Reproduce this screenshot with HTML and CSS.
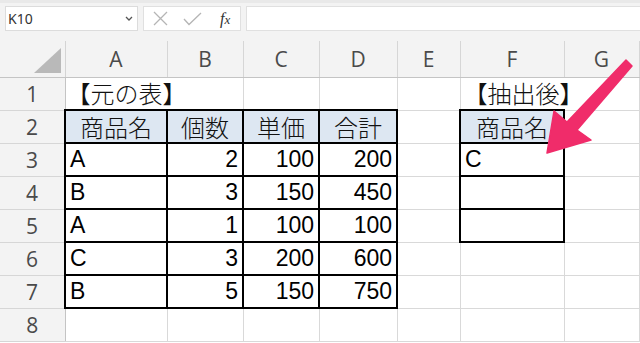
FILE: index.html
```html
<!DOCTYPE html>
<html lang="ja">
<head>
<meta charset="utf-8">
<title>Sheet</title>
<link rel="stylesheet" href="styles.css">
</head>
<body>
<div class="app">
  <div class="toolbar">
    <div class="namebox">
      <span class="ref">K10</span>
      <svg class="chev" width="8" height="5" viewBox="0 0 8 5"><path d="M1 1 L4 4 L7 1" fill="none" stroke="#555" stroke-width="1.3"/></svg>
    </div>
    <div class="fxbox">
      <svg class="icon-x" width="15" height="15" viewBox="0 0 15 15"><path d="M1 1 L14 14 M14 1 L1 14" stroke="#b5b5b5" stroke-width="1.3" fill="none"/></svg>
      <svg class="icon-check" width="19" height="14" viewBox="0 0 19 14"><path d="M1 7 L6 12.5 L18 1" stroke="#b5b5b5" stroke-width="1.3" fill="none"/></svg>
      <span class="fx"><i>f</i><i class="x">x</i></span>
    </div>
    <div class="formula"></div>
  </div>
  <table class="grid">
    <colgroup>
      <col class="c-rh"><col class="c-a"><col class="c-b"><col class="c-c"><col class="c-d"><col class="c-e"><col class="c-f"><col class="c-g">
    </colgroup>
    <tr class="colrow">
      <th class="corner"><svg class="tri" width="27" height="25" viewBox="0 0 27 25"><polygon points="0,25 27,25 27,0" fill="#b9b9b9"/></svg></th>
      <th class="ch">A</th><th class="ch">B</th><th class="ch">C</th><th class="ch">D</th><th class="ch">E</th><th class="ch">F</th><th class="ch">G</th>
    </tr>
    <tr class="r">
      <th class="rh">1</th>
      <td class="ov jp title1">【元の表】</td><td></td><td></td><td></td><td></td><td class="ov jp title2">【抽出後】</td><td></td>
    </tr>
    <tr class="r">
      <th class="rh">2</th>
      <td class="b h jp">商品名</td><td class="b h jp">個数</td><td class="b h jp">単価</td><td class="b h jp">合計</td><td></td><td class="b h jp">商品名</td><td></td>
    </tr>
    <tr class="r">
      <th class="rh">3</th>
      <td class="b">A</td><td class="b n">2</td><td class="b n">100</td><td class="b n">200</td><td></td><td class="b">C</td><td></td>
    </tr>
    <tr class="r">
      <th class="rh">4</th>
      <td class="b">B</td><td class="b n">3</td><td class="b n">150</td><td class="b n">450</td><td></td><td class="b"></td><td></td>
    </tr>
    <tr class="r">
      <th class="rh">5</th>
      <td class="b">A</td><td class="b n">1</td><td class="b n">100</td><td class="b n">100</td><td></td><td class="b"></td><td></td>
    </tr>
    <tr class="r">
      <th class="rh">6</th>
      <td class="b">C</td><td class="b n">3</td><td class="b n">200</td><td class="b n">600</td><td></td><td></td><td></td>
    </tr>
    <tr class="r">
      <th class="rh">7</th>
      <td class="b">B</td><td class="b n">5</td><td class="b n">150</td><td class="b n">750</td><td></td><td></td><td></td>
    </tr>
    <tr class="r">
      <th class="rh">8</th>
      <td></td><td></td><td></td><td></td><td></td><td></td><td></td>
    </tr>
  </table>
  <svg class="arrow" width="640" height="343" viewBox="0 0 640 343">
    <polygon points="626,60 632,66 577,130 591,140 547,153 554,111 567,122" fill="#f02c6a" stroke="#f02c6a" stroke-width="1.5" stroke-linejoin="round"/>
  </svg>
</div>
</body>
</html>
```

FILE: styles.css
```css
* { box-sizing: border-box; }
html, body { margin: 0; padding: 0; }
body {
  width: 640px;
  height: 343px;
  overflow: hidden;
  background: #fff;
  font-family: "Liberation Sans", "Noto Sans CJK JP", sans-serif;
}
.app {
  position: relative;
  width: 640px;
  height: 343px;
  overflow: hidden;
  background: #fff;
}
.toolbar {
  height: 41px;
  background: #f3f3f3;
  border-top: 3px solid #e9e9e9;
  padding-top: 3px;
  display: flex;
  align-items: flex-start;
}
.namebox {
  margin-left: 5px;
  width: 133px;
  height: 25px;
  background: #fff;
  border: 1px solid #dcdcdc;
  display: flex;
  align-items: center;
  justify-content: space-between;
  padding: 0 4px 0 2px;
}
.ref {
  font-family: "Noto Sans", sans-serif;
  font-size: 14px;
  color: #333;
}
.fxbox {
  margin-left: 5px;
  width: 98px;
  height: 25px;
  background: #fff;
  border: 1px solid #e0e0e0;
  display: flex;
  align-items: center;
  padding-left: 9px;
}
.icon-check { margin-left: 15px; }
.fx {
  margin-left: 18px;
  font-family: "Liberation Serif", serif;
  font-size: 16px;
  color: #333;
}
.fx .x { font-size: 13px; }
.formula {
  margin-left: 5px;
  flex: 1;
  height: 25px;
  background: #fff;
  border: 1px solid #e0e0e0;
  border-right: none;
}
.grid {
  border-collapse: collapse;
  table-layout: fixed;
  width: 639px;
}
.c-rh { width: 65px; }
.c-a { width: 102px; }
.c-b { width: 76px; }
.c-c { width: 76px; }
.c-d { width: 78px; }
.c-e { width: 63px; }
.c-f { width: 104px; }
.c-g { width: 75px; }
.colrow { height: 36px; }
.r { height: 33px; }
.corner {
  background: #f3f3f3;
  border-right: 1px solid #d4d4d4;
  border-bottom: 1px solid #c4c4c4;
  padding: 0;
  text-align: right;
  vertical-align: bottom;
}
.tri { display: block; margin: 0 4px 4px auto; }
.ch {
  background: #f3f3f3;
  border-right: 1px solid #d6d6d6;
  border-bottom: 1px solid #c4c4c4;
  font-family: "Open Sans", sans-serif;
  font-weight: 400;
  font-size: 21px;
  color: #4a4a4a;
  padding: 0;
  text-align: center;
  vertical-align: middle;
}
.rh {
  background: #f3f3f3;
  border-right: 1px solid #c4c4c4;
  border-bottom: 1px solid #d6d6d6;
  font-family: "Open Sans", sans-serif;
  font-weight: 400;
  font-size: 21px;
  color: #4a4a4a;
  padding: 0;
  text-align: center;
  vertical-align: middle;
}
td {
  border: 1px solid #d9d9d9;
  padding: 0 4px;
  font-size: 23px;
  line-height: 1;
  white-space: nowrap;
  overflow: visible;
  color: #000;
  vertical-align: middle;
}
.jp {
  font-family: "Noto Sans CJK JP", sans-serif;
  font-size: 24px;
  font-weight: 300;
  color: #111;
}
.b { border: 2px solid #000; }
.h { background: #dde7f2; text-align: center; }
.n { text-align: right; }
.ov { border-right-style: hidden; }
.title1 { padding-left: 1px; }
.title2 { padding-left: 3px; }
.arrow {
  position: absolute;
  left: 0;
  top: 0;
  pointer-events: none;
}
```
